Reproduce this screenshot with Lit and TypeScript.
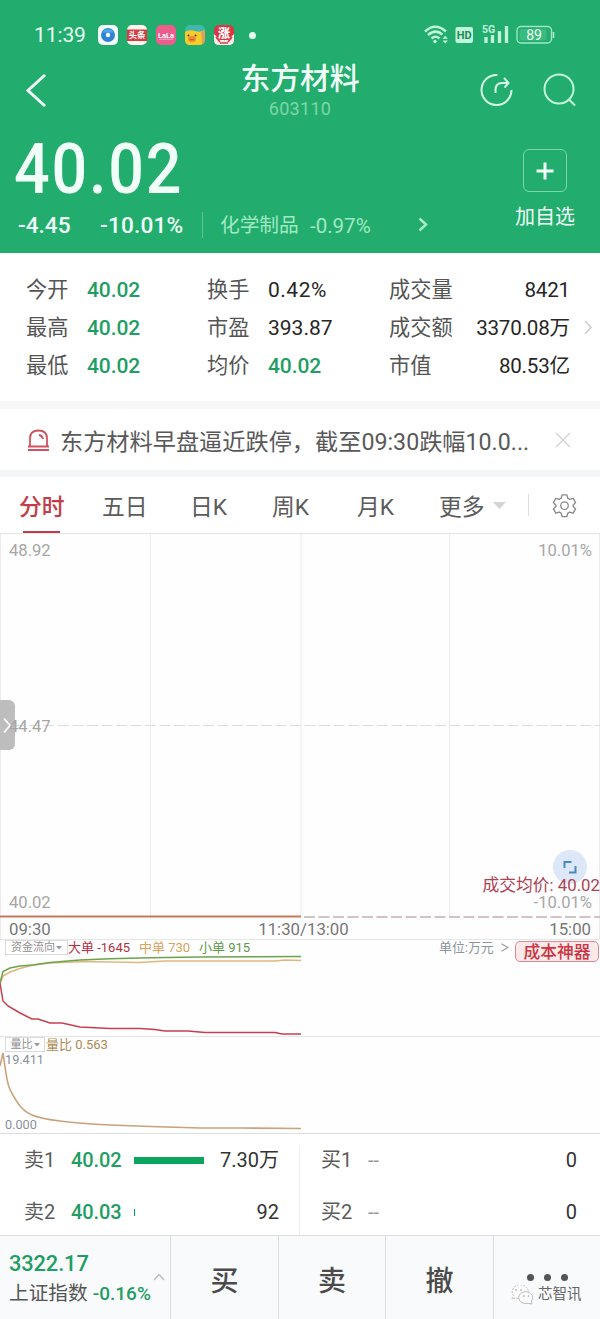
import { LitElement, html, css, svg } from "lit";
import { customElement } from "lit/decorators.js";

const base = css`
  :host { display: block; box-sizing: border-box; }
  * { box-sizing: border-box; }
  svg { display: block; flex: none; }
`;

@customElement("status-bar")
class StatusBar extends LitElement {
  static styles = [base, css`
    :host { height: 58px; padding-top: 12px; }
    .bar { display: flex; align-items: center; height: 46px; padding-left: 34px; color: #e4fff2; }
    .time { width: 64px; font-size: 21px; line-height: 24px; letter-spacing: -0.1px; white-space: nowrap; }
    .apps { display: flex; gap: 9px; }
    .dot { width: 7px; height: 7px; margin-left: 15px; border-radius: 50%; background: #e4fff2; }
    .signals { display: flex; align-items: center; margin-left: 168px; }
    .badge { font: 700 11px Roboto, sans-serif; }
    .tiny { font: 700 10.5px Roboto, sans-serif; }
    .toutiao { font: 700 8.5px "Noto Sans CJK SC", sans-serif; }
    .zhang { font: 900 12px "Noto Sans CJK SC", sans-serif; }
    .lala { font: 700 7.5px Roboto, sans-serif; }
    .num { font: 400 14px Roboto, sans-serif; }
  `];
  render() {
    return html`<div class="bar">
      <span class="time">11:39</span>
      <div class="apps">
        <svg width="20" height="20" viewBox="0 0 20 20"><rect width="20" height="20" rx="5" fill="#f4fdff"/><circle cx="10" cy="10" r="7" fill="#2e83d8"/><path d="M4 7.5A7 7 0 0 1 16 7.5" fill="#49a4ec"/><circle cx="10" cy="10" r="2.2" fill="#fff"/></svg>
        <svg width="20" height="20" viewBox="0 0 20 20"><rect width="20" height="20" rx="5" fill="#fff4f0"/><rect y="4.5" width="20" height="11.5" fill="#d63c42"/><text class="toutiao" x="10" y="13.4" text-anchor="middle" fill="#fff">头条</text></svg>
        <svg width="20" height="20" viewBox="0 0 20 20"><rect width="20" height="20" rx="5" fill="#ec5c8c"/><text class="lala" x="10" y="13" text-anchor="middle" fill="#fff">LaLa</text><path d="M3 14.2h14" stroke="#ffc3d7" stroke-width=".8"/></svg>
        <svg width="20" height="20" viewBox="0 0 20 20"><rect width="20" height="20" rx="5" fill="#40b8b0"/><path d="M0 7Q4 4 10 6T19 5V15Q19 20 14 20H5Q0 20 0 15Z" fill="#f7cc2a"/><path d="M16 7l4-2v10q0 3-3 4z" fill="#dfa15a"/><ellipse cx="7" cy="14" rx="4" ry="3" fill="#ee8a35"/><circle cx="3.5" cy="10.5" r="1" fill="#533"/><circle cx="10.5" cy="10.5" r="1" fill="#533"/><path d="M6 14v1M8 14v1" stroke="#8c3b1c"/></svg>
        <svg width="20" height="20" viewBox="0 0 20 20"><rect width="20" height="20" rx="5" fill="#d93846"/><path d="M0 9L6 15H14L20 9V15Q20 20 15 20H5Q0 20 0 15Z" fill="#fff0ee"/><path d="M2 12l4 5M18 12l-4 5M6 18h8" stroke="#d93846" stroke-width="1.6"/><text class="zhang" x="10" y="13" text-anchor="middle" fill="#fff" stroke="#d93846" stroke-width="1.6" paint-order="stroke">涨</text></svg>
      </div>
      <i class="dot"></i>
      <div class="signals">
        <svg width="131" height="24" viewBox="425 23 131 24" fill="none" stroke="#bff5da">
          <path d="M426 31.5Q436 22 447 31.5M429 35Q436.500 28.500 443.500 34.500M432.500 38.500Q436.500 35 440.500 38.500" stroke-width="2.5"/>
          <circle cx="436" cy="41.500" r="1.7" fill="#bff5da" stroke="none"/>
          <path d="M443.500 38.700l2.700-3 2.700 3zM443.500 40.500l2.700 3 2.700-3z" fill="#bff5da" stroke="none"/>
          <rect x="456.500" y="27" width="17.500" height="16" rx="2" fill="#bff5da" stroke="none"/>
          <text class="badge" x="465.200" y="39" text-anchor="middle" fill="#218a5b" stroke="none">HD</text>
          <text class="tiny" x="483" y="33" fill="#bff5da" stroke="none">5G</text>
          <path d="M487 43V37M493.500 43V35M500.500 43V31M507.500 43V26" stroke-width="3.300"/>
          <rect x="518" y="26.500" width="34.500" height="16.500" rx="4" stroke-width="1.400" stroke="#9be9c2"/>
          <rect x="520.500" y="29" width="27" height="11.500" rx="2" fill="#3dba80" stroke="none"/>
          <path d="M554.500 32v6" stroke-width="1.500"/>
          <text class="num" x="535" y="39.800" text-anchor="middle" fill="#eafff4" stroke="none">89</text>
        </svg>
      </div>
    </div>`;
  }
}

@customElement("quote-header")
class QuoteHeader extends LitElement {
  static styles = [base, css`
    :host { height: 253px; background: #22ad6e; color: #f0fff7; }
    .nav { display: grid; grid-template-columns: 200px 200px 200px; height: 64px; }
    .back { padding: 15px 0 0 25px; }
    .name { padding-top: 2px; text-align: center; }
    .title { font-size: 29.8px; line-height: 38px; font-weight: 500; }
    .code { font-size: 18px; line-height: 21px; letter-spacing: 0.3px; color: #7fd6a9; }
    .tools { display: flex; gap: 28px; padding: 14px 0 0 79px; }
    .body { display: flex; justify-content: space-between; height: 131px; }
    .price { width: 240px; height: 83px; padding-top: 5px; margin-left: 14px; font-size: 71px; line-height: 83px; font-weight: 500; letter-spacing: 2px; transform: scaleX(.885); transform-origin: 0 0; }
    .row { display: flex; align-items: center; height: 32px; margin-top: 5px; padding-left: 18px; font-size: 22.6px; line-height: 34px; font-weight: 500; white-space: nowrap; }
    .diff { width: 82px; }
    .pct { width: 102px; letter-spacing: 0.2px; }
    .rule { width: 1px; height: 26px; margin-top: -3px; background: #58c690; }
    .sector { width: 90px; margin-left: 17px; font-size: 19.7px; font-weight: 400; color: #a1e8c3; }
    .change { width: 108px; font-size: 20.5px; font-weight: 400; color: #a1e8c3; }
    .fav { width: 80px; margin-right: 15px; padding-top: 27px; text-align: center; font-size: 20px; line-height: 30px; }
    .plus { display: flex; align-items: center; justify-content: center; width: 44px; height: 43px; margin: 0 auto 10px; border: 1px solid #7dd5a8; border-radius: 6px; }
  `];
  render() {
    return html`<status-bar></status-bar>
      <div class="nav">
        <div class="back"><svg width="24" height="36" viewBox="0 0 24 36" fill="none" stroke="#effff7" stroke-width="3"><path d="M20 2L3 17.500L20 33"/></svg></div>
        <div class="name"><div class="title">东方材料</div><div class="code">603110</div></div>
        <div class="tools">
          <svg width="36" height="36" viewBox="0 0 36 36" fill="none" stroke="#d3fae5" stroke-width="2"><path d="M18.500 3A15 15 0 1 0 32.500 18"/><path d="M16.500 21V18Q16.500 11 23 11H29.500M25 6L29.500 11L25.500 15.500"/></svg>
          <svg width="36" height="36" viewBox="0 0 36 36" fill="none" stroke="#c3f5db" stroke-width="2"><circle cx="16" cy="17" r="14.500"/><path d="M26.500 28L32 33.500"/></svg>
        </div>
      </div>
      <div class="body">
        <div>
          <div class="price">40.02</div>
          <div class="row">
            <span class="diff">-4.45</span><span class="pct">-10.01%</span><i class="rule"></i>
            <span class="sector">化学制品</span><span class="change">-0.97%</span>
            <svg width="12" height="18" viewBox="0 0 12 18" fill="none" stroke="#a8ebc9" stroke-width="2.500"><path d="M1.500 1.500L8 7.500L1.500 13.500"/></svg>
          </div>
        </div>
        <div class="fav"><div class="plus"><svg width="18" height="18" viewBox="0 0 18 18" stroke="#f2fff8" stroke-width="3"><path d="M9 .5V17.500M.5 9H17.500"/></svg></div>加自选</div>
      </div>`;
  }
}

@customElement("quote-stats")
class QuoteStats extends LitElement {
  static styles = [base, css`
    :host { height: 148px; padding: 18px 0 0 26px; background: #fff; }
    .grid { display: grid; grid-template-columns: 61px 120px 61px 121px 181px 30px; grid-auto-rows: 38px; line-height: 38px; font-size: 21.2px; color: #555; white-space: nowrap; }
    .v { color: #262626; font-size: 21px; }
    .pc { letter-spacing: 0.5px; }
    .g { color: #1f9e64; font-size: 21px; font-weight: 500; letter-spacing: -0.1px; }
    .m { display: flex; justify-content: space-between; }
    .m .v { font-size: 20.6px; letter-spacing: -0.2px; }
    .arrow { padding: 11px 0 0 14px; }
  `];
  render() {
    const rows = [
      ["今开", "40.02", "换手", "0.42%", "成交量", "8421"],
      ["最高", "40.02", "市盈", "393.87", "成交额", "3370.08万"],
      ["最低", "40.02", "均价", "40.02", "市值", "80.53亿"],
    ];
    const kinds = ["v pc", "v", "g"];
    return html`<div class="grid">${rows.map((r, i) => html`
      <span>${r[0]}</span><span class="g">${r[1]}</span><span>${r[2]}</span>
      <span class=${kinds[i]}>${r[3]}</span>
      <span class="m"><span>${r[4]}</span><span class="v">${r[5]}</span></span>
      <span class="arrow">${i === 1 ? html`<svg width="9" height="15" viewBox="0 0 9 15" fill="none" stroke="#ccc" stroke-width="1.500"><path d="M1 1L7 7.500L1 14"/></svg>` : ""}</span>`)}
    </div>`;
  }
}

@customElement("alert-strip")
class AlertStrip extends LitElement {
  static styles = [base, css`
    :host { height: 76px; border-top: 8px solid #f7f7f8; border-bottom: 7px solid #f4f5f7; background: #fff; }
    .row { display: flex; align-items: center; height: 61px; padding: 1px 0 0 27px; }
    .text { width: 480px; margin-left: 10px; padding-top: 3px; font-size: 23.2px; line-height: 32px; color: #595959; white-space: nowrap; }
    .close { margin-left: 15px; }
  `];
  render() {
    return html`<div class="row">
      <svg width="23" height="23" viewBox="0 0 23 23" fill="none" stroke="#cc5361" stroke-width="1.800"><path d="M3 17V9.500Q3 1.500 11.500 1.500Q20 1.500 20 9.500V17M1 17.500H22M1 21H22M12 6Q15.500 6.500 16 10"/></svg>
      <span class="text">东方材料早盘逼近跌停，截至09:30跌幅10.0...</span>
      <svg class="close" width="16" height="16" viewBox="0 0 16 16" stroke="#d2d2d2" stroke-width="1.400"><path d="M1 1L15 15M15 1L1 15"/></svg>
    </div>`;
  }
}

@customElement("period-tabs")
class PeriodTabs extends LitElement {
  static styles = [base, css`
    :host { height: 57px; background: #fff; border-bottom: 1px solid #e4e4e4; }
    .row { display: grid; grid-template-columns: 83px 88px 82px 85px 82px 54px 35px 24px 50px; align-items: center; height: 56px; padding-left: 19px; font-size: 22.8px; color: #5c5c5c; white-space: nowrap; }
    .tab { height: 56px; line-height: 62px; }
    .active { display: flex; flex-direction: column; width: 46px; font-weight: 500; color: #c23c49; }
    .active span { height: 54px; }
    .active i { width: 37px; height: 2px; margin-left: 4px; background: #bd3e4a; }
    .rule { width: 1px; height: 22px; background: #ddd; }
  `];
  render() {
    return html`<div class="row">
      <div class="tab active"><span>分时</span><i></i></div>
      ${["五日", "日K", "周K", "月K", "更多"].map((t) => html`<div class="tab">${t}</div>`)}
      <svg width="13" height="7" viewBox="0 0 13 7"><path d="M0 0H13L6.500 7Z" fill="#d4d4d4"/></svg>
      <i class="rule"></i>
      <svg width="25" height="25" viewBox="0 0 26 26" fill="none" stroke="#8a8a8a" stroke-width="1.400" stroke-linejoin="round"><path d="M10.500 2H15.500L16.500 5.500L18.500 6.700L22 5.500L24.500 10L22 12.500V14L24.500 16.500L22 21L18.500 19.800L16.500 21L15.500 24.500H10.500L9.500 21L7.500 19.800L4 21L1.500 16.500L4 14V12.500L1.500 10L4 5.500L7.500 6.700L9.500 5.500Z"/><circle cx="13" cy="13.200" r="3.900"/></svg>
    </div>`;
  }
}

@customElement("price-chart")
class PriceChart extends LitElement {
  static styles = [base, css`
    :host { position: relative; height: 405px; background: #fefefe; }
    .grid { position: absolute; inset: 0; }
    .labels { position: relative; display: flex; flex-direction: column; justify-content: space-between; height: 380px; padding: 8px 8px 2px 9px; font-size: 16.6px; line-height: 18px; color: #a6a6a6; }
    .pair { display: flex; justify-content: space-between; }
    .times { position: relative; display: grid; grid-template-columns: 1fr 1fr 1fr; padding: 5px 9px 0; font-size: 16.8px; line-height: 21px; color: #777; }
    .mid { text-align: center; padding-left: 7px; }
    .end { text-align: right; }
    .drawer { position: absolute; left: 0; top: 166px; width: 15px; height: 50px; border-radius: 0 6px 6px 0; background: #bdbdbd; }
    .expand { position: absolute; left: 553px; top: 316px; width: 34px; height: 34px; border-radius: 50%; background: #dce8f8; }
    .avg { position: absolute; right: 0; top: 343px; font-size: 16.8px; line-height: 17px; color: #ae4252; white-space: nowrap; }
  `];
  render() {
    return html`
      <svg class="grid" width="600" height="405" viewBox="0 534 600 405" fill="none">
        <path d="M150.500 534V917M301 534V917M449.500 534V917" stroke="#eaeaea"/>
        <path d="M.5 534V939M599.500 534V939" stroke="#ececec"/>
        <path d="M0 725.500H600" stroke="#dcdcdc" stroke-dasharray="11 3.500"/>
        <path d="M304 917H600" stroke="#c2afb1" stroke-width="1.500" stroke-dasharray="11 3.500"/>
        <path d="M0 916.500H301" stroke="#c9775b" stroke-width="2.200"/>
      </svg>
      <div class="drawer"><svg width="15" height="50" viewBox="0 0 15 50" fill="none" stroke="#fff" stroke-width="1.800"><path d="M4 18.500L10 25.500L4 32.500"/></svg></div>
      <div class="expand"><svg width="34" height="34" viewBox="0 0 34 34" fill="none" stroke="#4a86c5" stroke-width="2"><path d="M11.500 18V12H18.500M16 22.500H22.500V16"/></svg></div>
      <div class="labels">
        <div class="pair"><span>48.92</span><span>10.01%</span></div>
        <div class="pair"><span>44.47</span></div>
        <div class="pair"><span>40.02</span><span>-10.01%</span></div>
      </div>
      <div class="avg">成交均价: 40.02</div>
      <div class="times"><span>09:30</span><span class="mid">11:30/13:00</span><span class="end">15:00</span></div>`;
  }
}

const TAG = svg`<path d="M0 0H6L3 3.500Z" fill="#999"/>`;

@customElement("flow-charts")
class FlowCharts extends LitElement {
  static styles = [base, css`
    .pane { position: relative; height: 97px; border-top: 1px solid #e6e6e6; background: #fefefe; }
    .plot { position: absolute; inset: -1px 0 0 0; }
    .head { position: relative; display: flex; align-items: flex-start; padding-left: 5px; font-size: 13px; line-height: 15px; white-space: nowrap; }
    .tag { display: flex; align-items: center; justify-content: center; gap: 1px; width: 63px; height: 15px; border: 1px solid #dcdcdc; background: #fff; font-size: 11px; color: #909090; }
    .short { width: 40px; }
    .big { width: 71px; color: #b3313e; }
    .middle { width: 60px; color: #d8a35c; }
    .small { width: 240px; color: #5d9b48; }
    .unit { display: flex; align-items: center; gap: 7px; width: 76px; font-size: 12.9px; color: #8c949c; }
    .tool { width: 84px; height: 21px; margin-top: 1px; border: 1px solid #d98a92; border-radius: 5px; background: #fbe9ea; color: #ca3542; font-size: 16.8px; font-weight: 500; line-height: 21px; text-align: center; }
    .ratio { color: #aa8a52; padding-left: 1px; }
    .scale { position: relative; display: flex; flex-direction: column; justify-content: space-between; height: 80px; padding-left: 5px; font-size: 12.7px; line-height: 15px; color: #87909a; }
  `];
  render() {
    return html`
      <div class="pane">
        <svg class="plot" width="600" height="97" viewBox="0 939 600 97" fill="none" stroke-width="1.500">
          <path d="M0 984L3 976L10 972L20 968.500L33 965L50 963L85 961.500L110 962L140 962.500L165 961L275 961L285 960L301 960.500" stroke="#dfb77c"/>
          <path d="M0 983L3 971.500L10 968L20 966L33 965L50 962.500L80 960L110 958.700L150 957.700L200 957L301 956.500" stroke="#6da34c"/>
          <path d="M0 983L3 1001L8 1006L20 1013L32 1019L38 1019L50 1023L62 1023L80 1027L110 1028.500L140 1028.500L155 1029.500L165 1031L188 1031L205 1032.500L275 1032.500L282 1034L301 1034" stroke="#c63f4c"/>
        </svg>
        <div class="head">
          <span class="tag">资金流向<svg width="6" height="4" viewBox="0 0 6 4">${TAG}</svg></span>
          <span class="big">大单 -1645</span><span class="middle">中单 730</span><span class="small">小单 915</span>
          <span class="unit">单位:万元<svg width="8" height="9" viewBox="0 0 8 9" fill="none" stroke="#999" stroke-width="1.200"><path d="M.5 .8L7 4.500L.5 8.200"/></svg></span>
          <span class="tool">成本神器</span>
        </div>
      </div>
      <div class="pane">
        <svg class="plot" width="600" height="97" viewBox="0 1036 600 97" fill="none" stroke="#c9a27c" stroke-width="1.600">
          <path d="M0 1066L3 1053L5 1067Q7 1081 9 1087Q12 1095 20 1106Q25 1112 32 1115Q42 1119 60 1121Q80 1123.500 110 1125L150 1126.500L200 1128H240L301 1128.500"/>
        </svg>
        <div class="head"><span class="tag short">量比<svg width="6" height="4" viewBox="0 0 6 4">${TAG}</svg></span><span class="ratio">量比 0.563</span></div>
        <div class="scale"><span>19.411</span><span>0.000</span></div>
      </div>`;
  }
}

@customElement("order-book")
class OrderBook extends LitElement {
  static styles = [base, css`
    :host { display: grid; grid-template-columns: 300px 300px; height: 102px; border-top: 1px solid #dedede; background: #fff; font-size: 20px; line-height: 53px; color: #5c5c5c; }
    .side { display: grid; grid-template-columns: 47px 63px 70px 75px; grid-auto-rows: 52px; padding-left: 24px; white-space: nowrap; background: linear-gradient(#eee, #eee) 100% 12px / 1px 100% no-repeat; }
    .buy { grid-template-columns: 47px 100px 109px; padding-left: 21px; background: none; }
    .price { color: #1f9e64; font-weight: 500; letter-spacing: -0.1px; }
    .bar { align-self: center; height: 7px; background: #0ca55e; }
    .qty { text-align: right; color: #333; }
    .none { color: #999; }
  `];
  render() {
    const sells = [["卖1", "40.02", 100, "7.30万"], ["卖2", "40.03", 1, "92"]] as const;
    return html`
      <div class="side">${sells.map(([n, p, w, q]) => html`<span>${n}</span><span class="price">${p}</span><i class="bar" style="width:${w}%"></i><span class="qty">${q}</span>`)}</div>
      <div class="side buy">${["买1", "买2"].map((n) => html`<span>${n}</span><span class="none">--</span><span class="qty">0</span>`)}</div>`;
  }
}

@customElement("trade-bar")
class TradeBar extends LitElement {
  static styles = [base, css`
    :host { display: grid; grid-template-columns: 170px 108px 107px 108px 107px; height: 84px; border-top: 1px solid #ddd; background: #f9fafc; }
    .index { display: flex; align-items: center; padding: 4px 0 0 9px; color: #555; white-space: nowrap; }
    .value { font-size: 21.8px; line-height: 28px; font-weight: 500; letter-spacing: -0.1px; color: #1f9e64; }
    .line { display: flex; gap: 5px; width: 144px; font-size: 19.7px; line-height: 31px; }
    .pct { font-size: 19px; font-weight: 500; color: #1f9e64; }
    .index svg { margin-top: -5px; }
    .btn { display: flex; align-items: center; justify-content: center; padding-top: 2px; border-left: 1px solid #ddd; font-size: 28px; font-weight: 500; color: #4b4b4b; }
    .more { border-left: 1px solid #ddd; padding: 38px 0 0 16px; }
    .dots { display: flex; gap: 10px; padding-left: 17px; }
    .dots i { width: 7px; height: 7px; border-radius: 50%; background: #555; }
    .mark { display: flex; align-items: center; gap: 4px; margin-top: 3px; font-size: 14.5px; line-height: 22px; color: #666; }
  `];
  render() {
    return html`
      <div class="index"><div><div class="value">3322.17</div><div class="line"><span>上证指数</span><span class="pct">-0.16%</span></div></div>
        <svg width="12" height="8" viewBox="0 0 12 8" fill="none" stroke="#bbb" stroke-width="1.300"><path d="M1 7L6 1.500L11 7"/></svg></div>
      ${["买", "卖", "撤"].map((t) => html`<div class="btn">${t}</div>`)}
      <div class="more"><div class="dots"><i></i><i></i><i></i></div>
        <div class="mark"><svg width="24" height="20" viewBox="0 0 24 20" fill="#fcfcfd" stroke="#b5b5b5" stroke-width=".9"><path d="M2 14L3.500 10.500A8 7 0 1 1 8 13.500L5 13Z" stroke-dasharray="2 1.200"/><path d="M22 19L21.500 16A7 6 0 1 0 18 18.300Z"/><g fill="#999" stroke="none"><circle cx="6" cy="5" r=".8"/><circle cx="11" cy="5" r=".8"/><circle cx="14" cy="11" r=".8"/><circle cx="18.500" cy="11" r=".8"/></g></svg>芯智讯</div>
      </div>`;
  }
}

@customElement("app-root")
class AppRoot extends LitElement {
  static styles = css`
    :host { display: flex; flex-direction: column; width: 600px; height: 1319px; overflow: hidden; background: #fff; font-family: Roboto, "Noto Sans CJK SC", sans-serif; }
    :host > * { flex: none; }
  `;
  render() {
    return html`
      <quote-header></quote-header>
      <quote-stats></quote-stats>
      <alert-strip></alert-strip>
      <period-tabs></period-tabs>
      <price-chart></price-chart>
      <flow-charts></flow-charts>
      <order-book></order-book>
      <trade-bar></trade-bar>`;
  }
}
